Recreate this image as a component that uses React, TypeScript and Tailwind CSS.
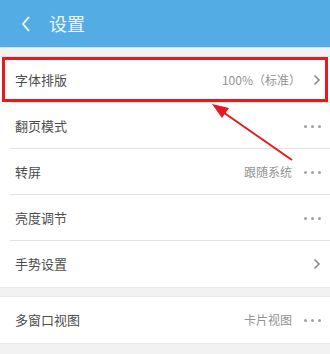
import React from "react";

const Dots = () => (
  <div className="flex items-center gap-[4px] ml-3">
    <span className="w-[3px] h-[3px] rounded-full bg-[#a0a0a0]" />
    <span className="w-[3px] h-[3px] rounded-full bg-[#a0a0a0]" />
    <span className="w-[3px] h-[3px] rounded-full bg-[#a0a0a0]" />
  </div>
);

const Chevron = () => (
  <svg width="8" height="12" viewBox="0 0 8 12" className="ml-3">
    <path d="M1.5 1.5 L6 6 L1.5 10.5" fill="none" stroke="#8a8a8a" strokeWidth="1.6" />
  </svg>
);

type RowProps = { label: string; value?: string; right: "dots" | "chev"; divider?: boolean };

const Row = ({ label, value, right, divider = true }: RowProps) => (
  <div className="relative h-[46px] flex items-center pl-[15px] pr-[9px] bg-white">
    <span className="text-[13px] text-[#4d4d4d]">{label}</span>
    <div className="ml-auto flex items-center">
      {value && <span className="text-[12px] text-[#939393]">{value}</span>}
      {right === "dots" ? <Dots /> : <Chevron />}
    </div>
    {divider && <div className="absolute left-[10px] right-0 bottom-0 h-px bg-[#e3e3e3]" />}
  </div>
);

export default function App() {
  return (
    <div
      className="relative w-[330px] h-[354px] bg-[#f2f2f2] overflow-hidden"
      style={{ fontFamily: '"Noto Sans CJK SC", "Noto Sans", sans-serif' }}
    >
      <div className="h-[47px] bg-[#53ace4] flex items-center pl-[20px]">
        <svg width="12" height="18" viewBox="0 0 12 18">
          <path d="M9 2 L3 9 L9 16" fill="none" stroke="#fff" strokeWidth="1.8" />
        </svg>
        <span className="ml-[17px] text-[18px] text-[#eef6fc]">设置</span>
      </div>
      <div className="h-[9px] border-t border-[#cfe3f1]" />
      <div className="border-t border-[#e6e6e6]">
        <Row label="字体排版" value="100%（标准）" right="chev" />
        <Row label="翻页模式" right="dots" />
        <Row label="转屏" value="跟随系统" right="dots" />
        <Row label="亮度调节" right="dots" />
        <Row label="手势设置" right="chev" divider={false} />
      </div>
      <div className="h-[10px] border-t border-b border-[#e6e6e6]" />
      <Row label="多窗口视图" value="卡片视图" right="dots" divider={false} />
      <div className="border-t border-[#e6e6e6]" />

      <div className="absolute left-[2px] top-[57px] w-[326px] h-[45px] border-[3px] border-[#e8181d]" />
      <svg className="absolute left-0 top-0" width="330" height="354" viewBox="0 0 330 354">
        <line x1="292" y1="160" x2="220" y2="110" stroke="#e8181d" strokeWidth="2" />
        <polygon points="212,104 229,108 222,118" fill="#e8181d" />
      </svg>
    </div>
  );
}
